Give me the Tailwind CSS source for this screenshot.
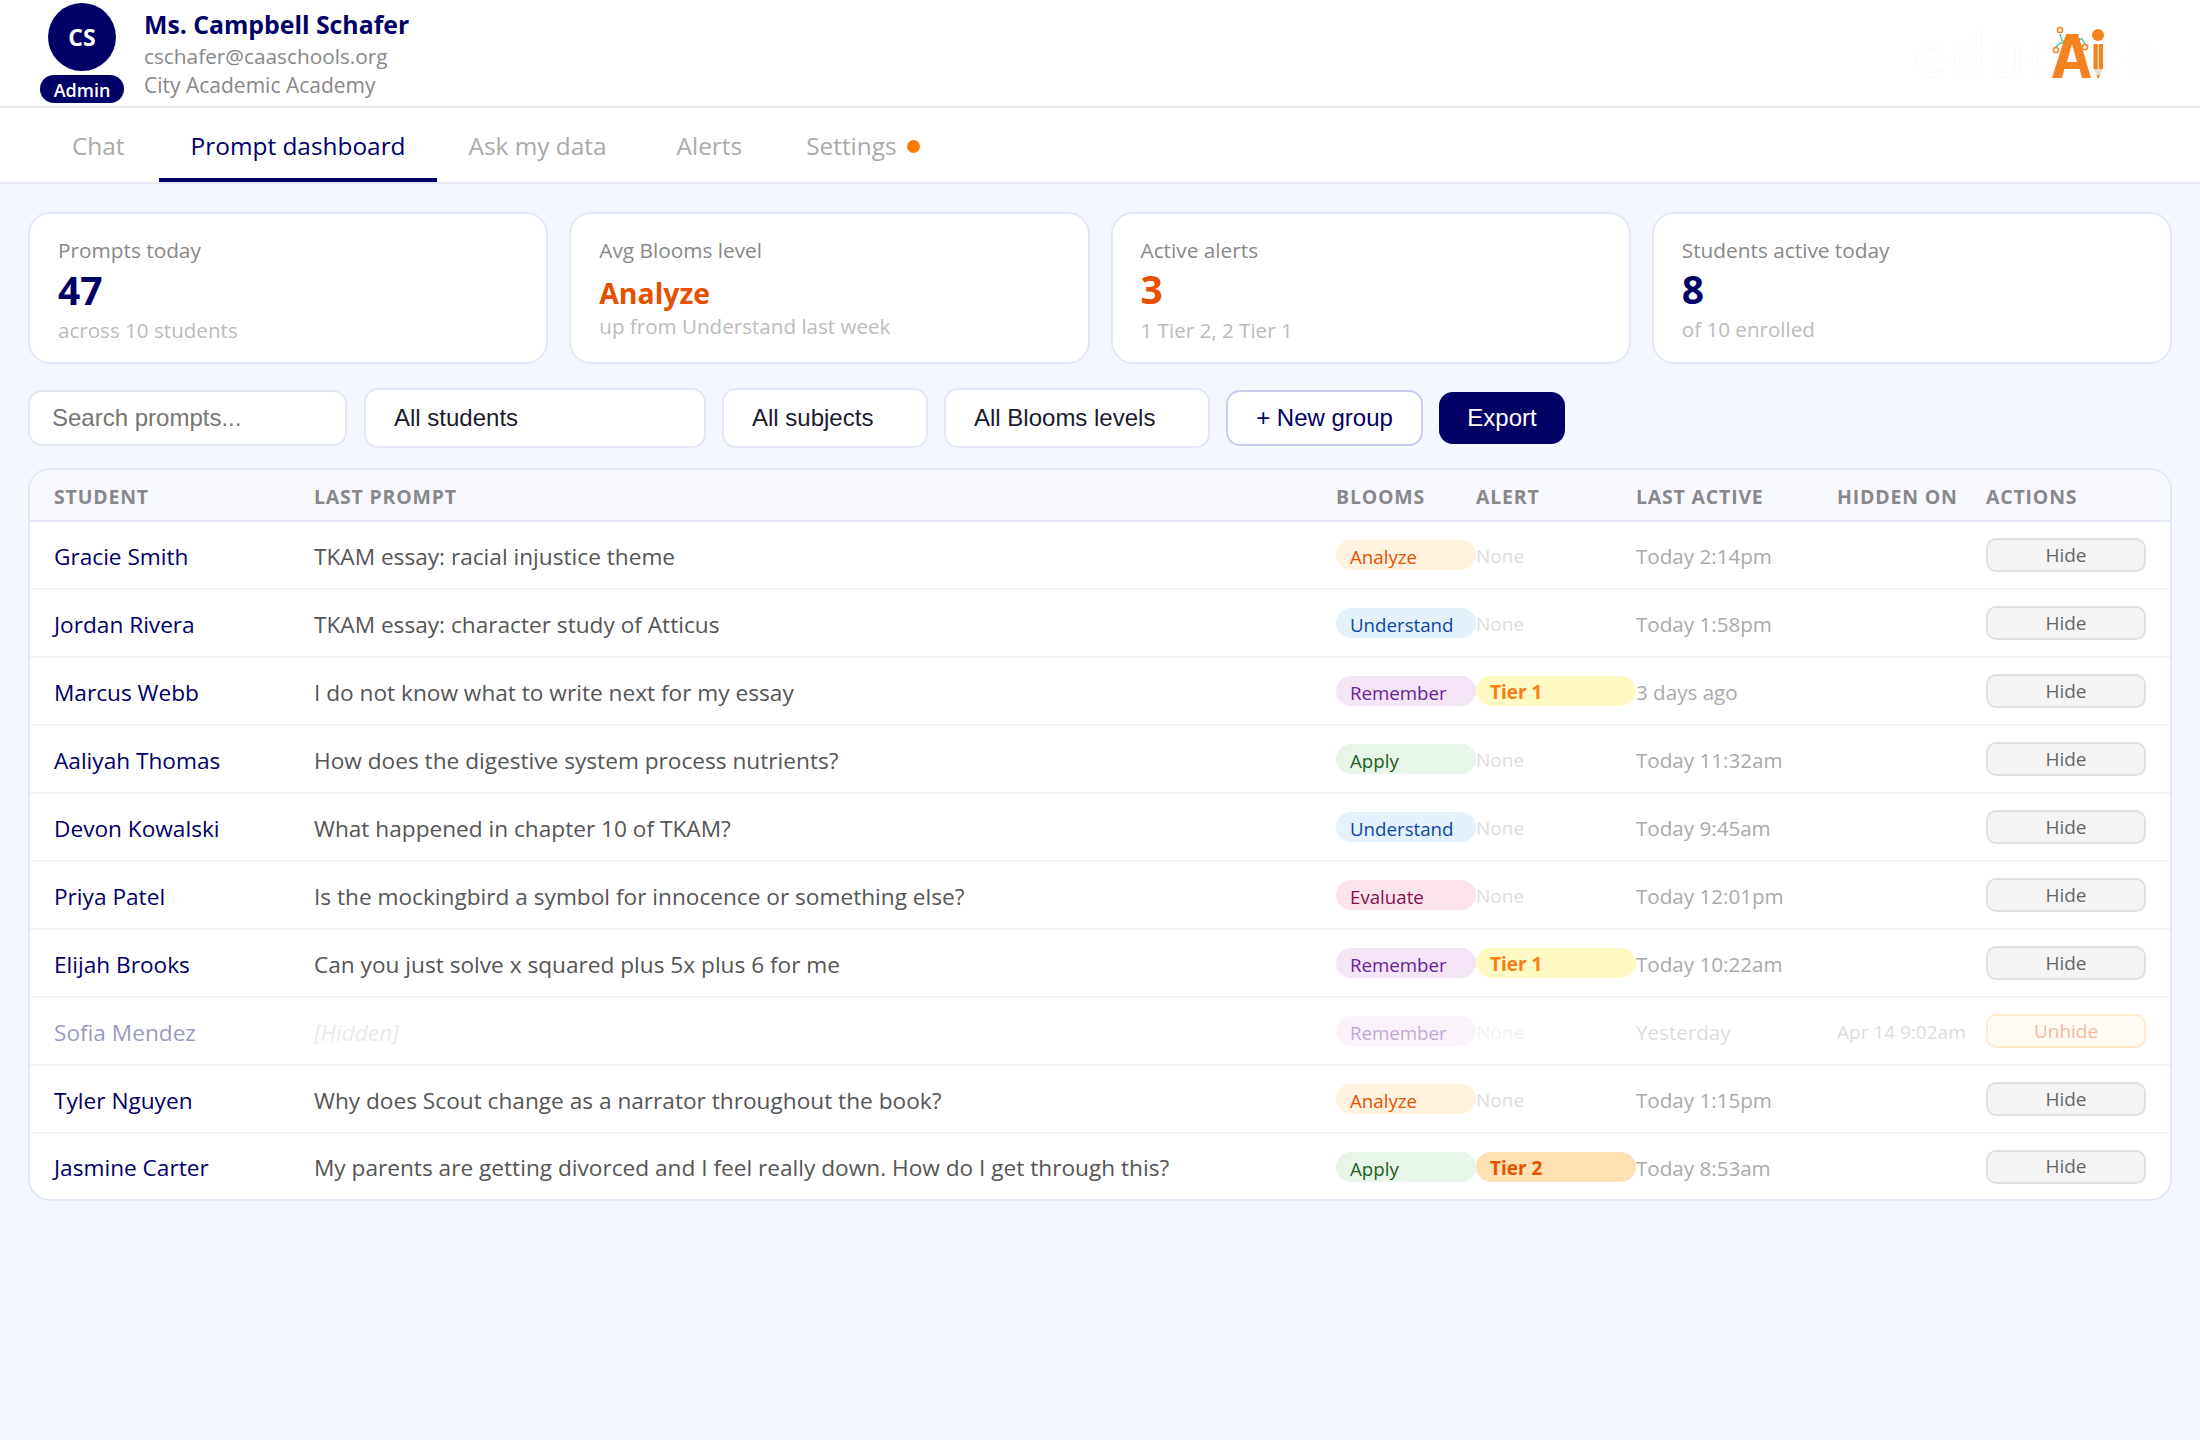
<!DOCTYPE html>
<html lang="en">
<head>
  <meta charset="UTF-8" />
  <script src="https://cdn.jsdelivr.net/npm/@tailwindcss/browser@4"></script>
  <title>Prompt dashboard</title>
</head>
<body class="bg-[#f4f7ff] font-['Open_Sans',sans-serif] h-[1440px] overflow-hidden">

<!-- Teacher header -->
<header class="bg-white h-[108px] border-b-2 border-[#e6e7f0] flex justify-between pl-[40px] pr-[28px]">
  <div class="flex">
    <div class="w-[84px] pt-[3px] flex flex-col items-center">
      <div class="w-[68px] h-[68px] rounded-full bg-[#000066] text-white font-bold text-[23px] flex items-center justify-center">CS</div>
      <div class="mt-[4px] w-[84px] h-[28px] pt-[2px] rounded-[14px] bg-[#000066] text-white font-semibold text-[18px] flex items-center justify-center">Admin</div>
    </div>
    <div class="ml-[20px] pt-[6px]">
      <div class="text-[#000066] font-bold text-[24.800px] leading-[36px]">Ms. Campbell Schafer</div>
      <div class="text-[#888888] text-[20.800px] leading-[28px]">cschafer@caaschools.org</div>
      <div class="text-[#888888] text-[21px] leading-[30px]">City Academic Academy</div>
    </div>
  </div>
  <svg class="mt-[10px]" width="272" height="80" viewBox="1900 10 272 80">
    <!-- nearly invisible wordmark behind the Ai mark -->
    <text x="1914" y="77" font-family="Lato, sans-serif" font-size="62" fill="#ffffff" stroke="#fbfbfb" stroke-width="1.2" textLength="244">educate</text>
    <path d="M2060 34 L2062 41 L2068 42 M2056 47 L2060 43 L2067 43 M2078 39 L2082 39 L2085 44" fill="none" stroke="#4fc3a1" stroke-width="1.4"/>
    <circle cx="2060" cy="30" r="2.6" fill="#fff" stroke="#f58220" stroke-width="1.5"/>
    <circle cx="2056" cy="50" r="2.6" fill="#fff" stroke="#f58220" stroke-width="1.5"/>
    <circle cx="2085" cy="47" r="2.6" fill="#fff" stroke="#f58220" stroke-width="1.5"/>
    <path fill-rule="evenodd" fill="#f58220" d="M2066 34 H2078 L2091 78 H2082 L2079.500 69 H2064.500 L2062 78 H2052 Z M2067 62 H2077 L2072 44 Z"/>
    <circle cx="2098" cy="35" r="6" fill="#f58220"/>
    <path d="M2093.500 44 H2103 V69 H2093.500 Z" fill="#f58220"/>
    <path d="M2098.300 44 V69" stroke="#fff" stroke-width="1"/>
    <path d="M2093.500 69 H2103 L2098.300 79 Z" fill="#e6dfd6"/>
    <path d="M2096.500 75 H2100 L2098.300 79 Z" fill="#f58220"/>
  </svg>
</header>

<!-- Tabs -->
<nav class="bg-white h-[76px] border-b-2 border-[#e6e7f0] flex pl-[40px] text-[24.400px] text-[#aaaaaa]">
  <a class="px-[32px] h-[74px] pt-[2px] flex items-center mr-[2px]">Chat</a>
  <a class="pl-[32px] pr-[31px] h-[74px] pt-[6px] flex items-center text-[#000066] border-b-4 border-[#000066]">Prompt dashboard</a>
  <a class="pl-[32px] pr-[38px] h-[74px] pt-[2px] flex items-center">Ask my data</a>
  <a class="px-[32px] h-[74px] pt-[2px] flex items-center">Alerts</a>
  <a class="pl-[32px] h-[74px] pt-[2px] flex items-center">Settings<span class="ml-[10px] w-[13px] h-[13px] rounded-full bg-[#ff7a00]"></span></a>
</nav>

<main class="px-[28px] pt-[28px]">
  <!-- Stat cards -->
  <section class="grid grid-cols-4 gap-[21px]">
    <div class="h-[152px] bg-white border-2 border-[#e4e7f5] rounded-[22px] px-[28px] flex flex-col justify-center">
      <div class="text-[#888888] text-[20.800px] leading-[30px] mt-[4px]">Prompts today</div>
      <div class="text-[#000066] font-bold text-[39px] leading-[50px]">47</div>
      <div class="text-[#bbbbbb] text-[20.600px] leading-[30px]">across 10 students</div>
    </div>
    <div class="h-[152px] bg-white border-2 border-[#e4e7f5] rounded-[22px] px-[28px] flex flex-col justify-center">
      <div class="text-[#888888] text-[20.800px] leading-[30px]">Avg Blooms level</div>
      <div class="text-[#e65100] font-bold text-[28.400px] leading-[42px] mt-[7px]">Analyze</div>
      <div class="text-[#bbbbbb] text-[20.600px] leading-[30px] mt-[-3px]">up from Understand last week</div>
    </div>
    <div class="h-[152px] bg-white border-2 border-[#e4e7f5] rounded-[22px] px-[28px] flex flex-col justify-center">
      <div class="text-[#888888] text-[20.800px] leading-[30px] mt-[3px]">Active alerts</div>
      <div class="text-[#e65100] font-bold text-[39px] leading-[50px] mt-[-1px]">3</div>
      <div class="text-[#bbbbbb] text-[20.600px] leading-[30px] mt-[1px]">1 Tier 2, 2 Tier 1</div>
    </div>
    <div class="h-[152px] bg-white border-2 border-[#e4e7f5] rounded-[22px] px-[28px] flex flex-col justify-center">
      <div class="text-[#888888] text-[20.800px] leading-[30px] mt-[3px]">Students active today</div>
      <div class="text-[#000066] font-bold text-[39px] leading-[50px] mt-[-1px]">8</div>
      <div class="text-[#bbbbbb] text-[20.600px] leading-[30px]">of 10 enrolled</div>
    </div>
  </section>

  <!-- Filters -->
  <section class="flex items-center mt-[24px] h-[60px] font-['Liberation_Sans',sans-serif] text-[24px]">
    <input class="w-[319px] h-[56px] bg-white border-2 border-[#e4e7f5] rounded-[14px] px-[22px] outline-none text-[#1a1a2e] placeholder:text-[#757575]" placeholder="Search prompts..." />
    <select class="ml-[17px] w-[342px] h-[60px] bg-white border-2 border-[#e4e7f5] rounded-[14px] pl-[28px] appearance-none text-[#1a1a2e]"><option>All students</option></select>
    <select class="ml-[16px] w-[206px] h-[60px] bg-white border-2 border-[#e4e7f5] rounded-[14px] pl-[28px] appearance-none text-[#1a1a2e]"><option>All subjects</option></select>
    <select class="ml-[16px] w-[266px] h-[60px] bg-white border-2 border-[#e4e7f5] rounded-[14px] pl-[28px] appearance-none text-[#1a1a2e]"><option>All Blooms levels</option></select>
    <button class="ml-[16px] w-[197px] h-[56px] bg-white border-2 border-[#c9cdf0] rounded-[14px] text-[#000066]">+ New group</button>
    <button class="ml-[16px] w-[126px] h-[52px] bg-[#000066] rounded-[14px] text-white">Export</button>
  </section>

  <!-- Students table -->
  <section class="mt-[20px] bg-white border-2 border-[#e4e7f5] rounded-[22px] overflow-hidden w-[2144px]">
    <table class="table-fixed w-full border-collapse text-left">
      <colgroup>
        <col class="w-[284px]" /><col class="w-[1022px]" /><col class="w-[140px]" /><col class="w-[160px]" /><col class="w-[201px]" /><col class="w-[149px]" /><col />
      </colgroup>
      <thead class="bg-[#f8f9ff] text-[#888888] font-bold text-[19.500px] tracking-[0.8px]">
        <tr class="h-[51px] border-b-2 border-[#e4e7f5]">
          <th class="pl-[24px] pt-[4px]">STUDENT</th><th class="pt-[4px]">LAST PROMPT</th><th class="pt-[4px]">BLOOMS</th><th class="pt-[4px]">ALERT</th><th class="pt-[4px]">LAST ACTIVE</th><th class="pt-[4px]">HIDDEN ON</th><th class="pt-[4px]">ACTIONS</th>
        </tr>
      </thead>
      <tbody class="text-[22.650px]">
        <tr class="h-[68px] border-b-2 border-[#f4f4f7]">
          <td class="pl-[24px] pt-[3px] text-[#000066]">Gracie Smith</td>
          <td class="pt-[3px] text-[#555555]">TKAM essay: racial injustice theme</td>
          <td><span class="block h-[30px] leading-[33px] rounded-full pl-[14px] text-[18.700px] bg-[#fff3e0] text-[#e65100]">Analyze</span></td>
          <td class="pt-[2px] text-[19px] text-[#dddddd]">None</td>
          <td class="pt-[3px] text-[20.600px] text-[#aaaaaa]">Today 2:14pm</td>
          <td></td>
          <td><button class="block w-[160px] h-[34px] bg-[#f5f5f5] border-2 border-[#e0e0e0] rounded-[10px] text-[#666666] text-[19px]">Hide</button></td>
        </tr>
        <tr class="h-[68px] border-b-2 border-[#f4f4f7]">
          <td class="pl-[24px] pt-[3px] text-[#000066]">Jordan Rivera</td>
          <td class="pt-[3px] text-[#555555]">TKAM essay: character study of Atticus</td>
          <td><span class="block h-[30px] leading-[33px] rounded-full pl-[14px] text-[18.700px] bg-[#e3f2fd] text-[#0d47a1]">Understand</span></td>
          <td class="pt-[2px] text-[19px] text-[#dddddd]">None</td>
          <td class="pt-[3px] text-[20.600px] text-[#aaaaaa]">Today 1:58pm</td>
          <td></td>
          <td><button class="block w-[160px] h-[34px] bg-[#f5f5f5] border-2 border-[#e0e0e0] rounded-[10px] text-[#666666] text-[19px]">Hide</button></td>
        </tr>
        <tr class="h-[68px] border-b-2 border-[#f4f4f7]">
          <td class="pl-[24px] pt-[3px] text-[#000066]">Marcus Webb</td>
          <td class="pt-[3px] text-[#555555]">I do not know what to write next for my essay</td>
          <td><span class="block h-[30px] leading-[33px] rounded-full pl-[14px] text-[18.700px] bg-[#f3e5f5] text-[#6a1b9a]">Remember</span></td>
          <td><span class="block h-[30px] leading-[33px] rounded-full pl-[14px] text-[19px] font-bold bg-[#fff9c4] text-[#f57f17]">Tier 1</span></td>
          <td class="pt-[3px] text-[20.600px] text-[#aaaaaa]">3 days ago</td>
          <td></td>
          <td><button class="block w-[160px] h-[34px] bg-[#f5f5f5] border-2 border-[#e0e0e0] rounded-[10px] text-[#666666] text-[19px]">Hide</button></td>
        </tr>
        <tr class="h-[68px] border-b-2 border-[#f4f4f7]">
          <td class="pl-[24px] pt-[3px] text-[#000066]">Aaliyah Thomas</td>
          <td class="pt-[3px] text-[#555555]">How does the digestive system process nutrients?</td>
          <td><span class="block h-[30px] leading-[33px] rounded-full pl-[14px] text-[18.700px] bg-[#e8f5e9] text-[#1b5e20]">Apply</span></td>
          <td class="pt-[2px] text-[19px] text-[#dddddd]">None</td>
          <td class="pt-[3px] text-[20.600px] text-[#aaaaaa]">Today 11:32am</td>
          <td></td>
          <td><button class="block w-[160px] h-[34px] bg-[#f5f5f5] border-2 border-[#e0e0e0] rounded-[10px] text-[#666666] text-[19px]">Hide</button></td>
        </tr>
        <tr class="h-[68px] border-b-2 border-[#f4f4f7]">
          <td class="pl-[24px] pt-[3px] text-[#000066]">Devon Kowalski</td>
          <td class="pt-[3px] text-[#555555]">What happened in chapter 10 of TKAM?</td>
          <td><span class="block h-[30px] leading-[33px] rounded-full pl-[14px] text-[18.700px] bg-[#e3f2fd] text-[#0d47a1]">Understand</span></td>
          <td class="pt-[2px] text-[19px] text-[#dddddd]">None</td>
          <td class="pt-[3px] text-[20.600px] text-[#aaaaaa]">Today 9:45am</td>
          <td></td>
          <td><button class="block w-[160px] h-[34px] bg-[#f5f5f5] border-2 border-[#e0e0e0] rounded-[10px] text-[#666666] text-[19px]">Hide</button></td>
        </tr>
        <tr class="h-[68px] border-b-2 border-[#f4f4f7]">
          <td class="pl-[24px] pt-[3px] text-[#000066]">Priya Patel</td>
          <td class="pt-[3px] text-[#555555]">Is the mockingbird a symbol for innocence or something else?</td>
          <td><span class="block h-[30px] leading-[33px] rounded-full pl-[14px] text-[18.700px] bg-[#fce4ec] text-[#880e4f]">Evaluate</span></td>
          <td class="pt-[2px] text-[19px] text-[#dddddd]">None</td>
          <td class="pt-[3px] text-[20.600px] text-[#aaaaaa]">Today 12:01pm</td>
          <td></td>
          <td><button class="block w-[160px] h-[34px] bg-[#f5f5f5] border-2 border-[#e0e0e0] rounded-[10px] text-[#666666] text-[19px]">Hide</button></td>
        </tr>
        <tr class="h-[68px] border-b-2 border-[#f4f4f7]">
          <td class="pl-[24px] pt-[3px] text-[#000066]">Elijah Brooks</td>
          <td class="pt-[3px] text-[#555555]">Can you just solve x squared plus 5x plus 6 for me</td>
          <td><span class="block h-[30px] leading-[33px] rounded-full pl-[14px] text-[18.700px] bg-[#f3e5f5] text-[#6a1b9a]">Remember</span></td>
          <td><span class="block h-[30px] leading-[33px] rounded-full pl-[14px] text-[19px] font-bold bg-[#fff9c4] text-[#f57f17]">Tier 1</span></td>
          <td class="pt-[3px] text-[20.600px] text-[#aaaaaa]">Today 10:22am</td>
          <td></td>
          <td><button class="block w-[160px] h-[34px] bg-[#f5f5f5] border-2 border-[#e0e0e0] rounded-[10px] text-[#666666] text-[19px]">Hide</button></td>
        </tr>
        <!-- hidden prompt: whole row is faded -->
        <tr class="h-[68px] border-b-2 border-[#f4f4f7]">
          <td class="pl-[24px] pt-[3px] text-[#000066] opacity-40">Sofia Mendez</td>
          <td class="pt-[3px] text-[#cccccc] italic opacity-40">[Hidden]</td>
          <td class="opacity-40"><span class="block h-[30px] leading-[33px] rounded-full pl-[14px] text-[18.700px] bg-[#f3e5f5] text-[#6a1b9a]">Remember</span></td>
          <td class="pt-[2px] text-[19px] text-[#dddddd] opacity-40">None</td>
          <td class="pt-[3px] text-[20.600px] text-[#aaaaaa] opacity-40">Yesterday</td>
          <td class="pt-[3px] text-[19px] text-[#aaaaaa] opacity-40">Apr 14 9:02am</td>
          <td class="opacity-40"><button class="block w-[160px] h-[34px] bg-[#fff3e0] border-2 border-[#ffcc80] rounded-[10px] text-[#e65100] text-[19px]">Unhide</button></td>
        </tr>
        <tr class="h-[68px] border-b-2 border-[#f4f4f7]">
          <td class="pl-[24px] pt-[3px] text-[#000066]">Tyler Nguyen</td>
          <td class="pt-[3px] text-[#555555]">Why does Scout change as a narrator throughout the book?</td>
          <td><span class="block h-[30px] leading-[33px] rounded-full pl-[14px] text-[18.700px] bg-[#fff3e0] text-[#e65100]">Analyze</span></td>
          <td class="pt-[2px] text-[19px] text-[#dddddd]">None</td>
          <td class="pt-[3px] text-[20.600px] text-[#aaaaaa]">Today 1:15pm</td>
          <td></td>
          <td><button class="block w-[160px] h-[34px] bg-[#f5f5f5] border-2 border-[#e0e0e0] rounded-[10px] text-[#666666] text-[19px]">Hide</button></td>
        </tr>
        <tr class="h-[66px]">
          <td class="pl-[24px] pt-[3px] text-[#000066]">Jasmine Carter</td>
          <td class="pt-[3px] text-[#555555]">My parents are getting divorced and I feel really down. How do I get through this?</td>
          <td><span class="block h-[30px] leading-[33px] rounded-full pl-[14px] text-[18.700px] bg-[#e8f5e9] text-[#1b5e20]">Apply</span></td>
          <td><span class="block h-[30px] leading-[33px] rounded-full pl-[14px] text-[19px] font-bold bg-[#ffe0b2] text-[#e65100]">Tier 2</span></td>
          <td class="pt-[3px] text-[20.600px] text-[#aaaaaa]">Today 8:53am</td>
          <td></td>
          <td><button class="block w-[160px] h-[34px] bg-[#f5f5f5] border-2 border-[#e0e0e0] rounded-[10px] text-[#666666] text-[19px]">Hide</button></td>
        </tr>
      </tbody>
    </table>
  </section>
</main>

</body>
</html>
